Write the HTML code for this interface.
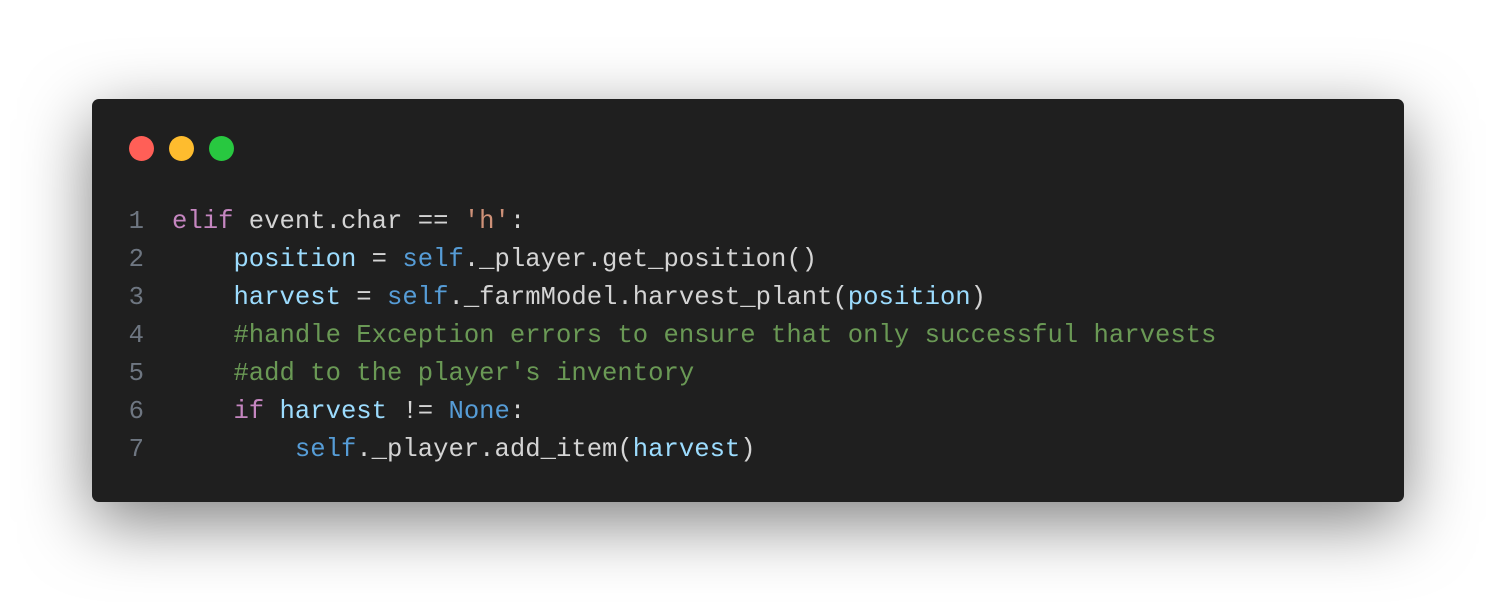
<!DOCTYPE html>
<html><head><style>
html,body{margin:0;padding:0;width:1496px;height:602px;background:#fff;overflow:hidden}
.card{position:absolute;left:92px;top:99px;width:1312px;height:403px;background:#1f1f1f;border-radius:7px;box-shadow:0 20px 68px rgba(0,0,0,.5)}
.dot{position:absolute;top:37px;width:25px;height:25px;border-radius:50%}
pre{position:absolute;left:0;top:104px;margin:0;font-family:"Liberation Mono",monospace;font-size:25.6px;line-height:38px;color:#d4d4d4}
.ln{display:inline-block;width:52px;text-align:right;color:#6e7681;margin-right:28px}
.k{color:#c586c0}.v{color:#9cdcfe}.s{color:#569cd6}.str{color:#ce9178}.c{color:#6a9955}
</style></head><body>
<div class="card">
<div class="dot" style="left:37px;background:#ff5f57"></div>
<div class="dot" style="left:77px;background:#febc2e"></div>
<div class="dot" style="left:117px;background:#28c840"></div>
<pre><span class="ln">1</span><span class="k">elif</span> event.char == <span class="str">'h'</span>:
<span class="ln">2</span>    <span class="v">position</span> = <span class="s">self</span>._player.get_position()
<span class="ln">3</span>    <span class="v">harvest</span> = <span class="s">self</span>._farmModel.harvest_plant(<span class="v">position</span>)
<span class="ln">4</span>    <span class="c">#handle Exception errors to ensure that only successful harvests</span>
<span class="ln">5</span>    <span class="c">#add to the player's inventory</span>
<span class="ln">6</span>    <span class="k">if</span> <span class="v">harvest</span> != <span class="s">None</span>:
<span class="ln">7</span>        <span class="s">self</span>._player.add_item(<span class="v">harvest</span>)</pre>
</div>
</body></html>
